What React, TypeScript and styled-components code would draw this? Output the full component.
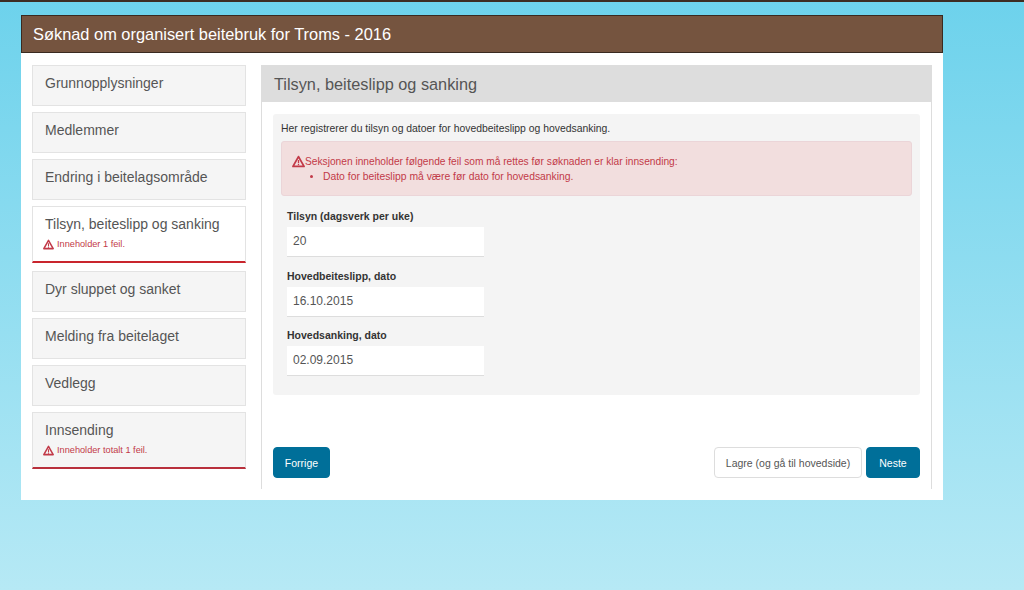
import React from "react";
import styled, { createGlobalStyle } from "styled-components";

const Global = createGlobalStyle`
  html, body { margin: 0; padding: 0; height: 100%; }
  body {
    height: 590px;
    overflow: hidden;
    background: linear-gradient(180deg, #6dd2ec 0%, #b6e9f5 100%);
    font-family: "Liberation Sans", Arial, sans-serif;
    color: #555;
  }
  * { box-sizing: border-box; }
`;

const TopLine = styled.div`
  height: 2px;
  background: #3d2c22;
`;

const Page = styled.div`
  width: 922px;
  height: 485px;
  margin: 13px 0 0 21px;
  background: #fff;
  display: flex;
  flex-direction: column;
`;

const Header = styled.header`
  height: 38px;
  background: #75543f;
  border: 1px solid #3a2a20;
  color: #fff;
  font-size: 16.4px;
  line-height: 38px;
  padding-left: 11px;
  display: flex;
  align-items: center;
`;

const Body = styled.div`
  display: flex;
  padding: 12px 11px 0 11px;
  gap: 15px;
`;

const Side = styled.nav`
  width: 214px;
  display: flex;
  flex-direction: column;
  gap: 6px;
`;

const Item = styled.div<{ $active?: boolean; $error?: boolean }>`
  height: ${(p) => (p.$error ? "57px" : "41px")};
  margin-bottom: ${(p) => (p.$error ? "2px" : "0")};
  background: ${(p) => (p.$active ? "#fff" : "#f5f5f5")};
  border: 1px solid #e3e3e3;
  border-bottom: ${(p) =>
    p.$error ? `2px solid ${p.$active ? "#c9252d" : "#b8303c"}` : "1px solid #e3e3e3"};
  padding: 9px 12px 0 12px;
  font-size: 14px;
  line-height: 17px;
  color: #555;
`;

const ItemError = styled.div`
  display: flex;
  align-items: center;
  gap: 3px;
  margin: 5px 0 0 -2px;
  font-size: 9.2px;
  line-height: 12px;
  color: #c23a48;
`;

const Main = styled.main`
  width: 671px;
  height: 424px;
  display: flex;
  flex-direction: column;
  border-left: 1px solid #ddd;
  border-right: 1px solid #ddd;
`;

const MainTitle = styled.h2`
  margin: 0 0 0 -1px;
  width: 671px;
  height: 37px;
  background: #ddd;
  font-size: 16.3px;
  font-weight: 400;
  color: #555;
  line-height: 39px;
  padding-left: 13px;
`;

const Well = styled.section`
  margin: 12px 11px 0 11px;
  height: 281px;
  background: #f4f4f4;
  border-radius: 3px;
  padding: 8px;
`;

const Intro = styled.p`
  margin: 0 0 6px 0;
  font-size: 10.4px;
  line-height: 13px;
  color: #333;
`;

const Alert = styled.div`
  height: 55px;
  background: #f2dede;
  border: 1px solid #ebd5d8;
  border-radius: 3px;
  padding: 12px 0 0 10px;
  color: #c23a48;
  font-size: 10.2px;
  line-height: 15px;
`;

const AlertHead = styled.div`
  display: flex;
  align-items: center;
`;

const AlertList = styled.ul`
  margin: 0;
  padding: 0 0 0 31px;
  font-size: 10.37px;
  line-height: 15px;
`;

const Field = styled.div`
  width: 197px;
  margin: 0 0 0 6px;
`;

const Fields = styled.div`
  margin-top: 14px;
  display: flex;
  flex-direction: column;
  gap: 12.5px;
`;

const Label = styled.label`
  display: block;
  font-size: 10.5px;
  font-weight: 700;
  line-height: 13px;
  margin-bottom: 4px;
  color: #333;
`;

const Input = styled.div`
  height: 30px;
  background: #fff;
  border-bottom: 1px solid #ddd;
  padding-left: 6px;
  font-size: 12px;
  line-height: 29px;
  color: #555;
`;

const Actions = styled.div`
  margin: 52px 11px 0 11px;
  display: flex;
  justify-content: space-between;
`;

const ActionsRight = styled.div`
  display: flex;
  gap: 4px;
`;

const Button = styled.div<{ $primary?: boolean; $w: number }>`
  width: ${(p) => p.$w}px;
  height: 31px;
  border-radius: 4px;
  border: 1px solid ${(p) => (p.$primary ? "#006f99" : "#ddd")};
  background: ${(p) => (p.$primary ? "#006f99" : "#fff")};
  color: ${(p) => (p.$primary ? "#fff" : "#555")};
  font-size: 10.5px;
  display: flex;
  align-items: center;
  justify-content: center;
`;

const Warn = ({ size }: { size: number }) => (
  <svg width={size} height={size} viewBox="0 0 16 16" style={{ flex: "none" }}>
    <path
      d="M8 2 L14.8 14 H1.2 Z"
      fill="none"
      stroke="#c23a48"
      strokeWidth="2.2"
      strokeLinejoin="round"
    />
    <path d="M8 6 V10.2 M8 11 V12.6" stroke="#c23a48" strokeWidth="1.6" />
  </svg>
);

const nav = [
  { t: "Grunnopplysninger" },
  { t: "Medlemmer" },
  { t: "Endring i beitelagsområde" },
  { t: "Tilsyn, beiteslipp og sanking", e: "Inneholder 1 feil.", a: true },
  { t: "Dyr sluppet og sanket" },
  { t: "Melding fra beitelaget" },
  { t: "Vedlegg" },
  { t: "Innsending", e: "Inneholder totalt 1 feil." },
];

const fields = [
  { l: "Tilsyn (dagsverk per uke)", v: "20" },
  { l: "Hovedbeiteslipp, dato", v: "16.10.2015" },
  { l: "Hovedsanking, dato", v: "02.09.2015" },
];

export default function App() {
  return (
    <>
      <Global />
      <TopLine />
      <Page>
        <Header>Søknad om organisert beitebruk for Troms - 2016</Header>
        <Body>
          <Side>
            {nav.map((n) => (
              <Item key={n.t} $active={n.a} $error={!!n.e}>
                {n.t}
                {n.e && (
                  <ItemError>
                    <Warn size={11} />
                    {n.e}
                  </ItemError>
                )}
              </Item>
            ))}
          </Side>
          <Main>
            <MainTitle>Tilsyn, beiteslipp og sanking</MainTitle>
            <Well>
              <Intro>Her registrerer du tilsyn og datoer for hovedbeiteslipp og hovedsanking.</Intro>
              <Alert>
                <AlertHead>
                  <Warn size={13} />
                  Seksjonen inneholder følgende feil som må rettes før søknaden er klar innsending:
                </AlertHead>
                <AlertList>
                  <li>Dato for beiteslipp må være før dato for hovedsanking.</li>
                </AlertList>
              </Alert>
              <Fields>
                {fields.map((f) => (
                  <Field key={f.l}>
                    <Label>{f.l}</Label>
                    <Input>{f.v}</Input>
                  </Field>
                ))}
              </Fields>
            </Well>
            <Actions>
              <Button $primary $w={57}>Forrige</Button>
              <ActionsRight>
                <Button $w={148}>Lagre (og gå til hovedside)</Button>
                <Button $primary $w={54}>Neste</Button>
              </ActionsRight>
            </Actions>
          </Main>
        </Body>
      </Page>
    </>
  );
}
